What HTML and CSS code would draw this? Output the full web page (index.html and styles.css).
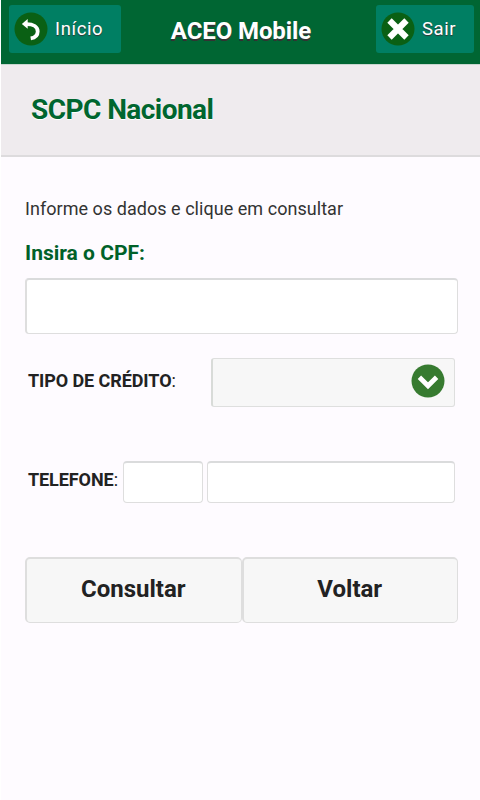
FILE: index.html
```html
<!DOCTYPE html>
<html lang="pt-BR">
<head>
<meta charset="utf-8">
<meta name="viewport" content="width=device-width">
<title>ACEO Mobile</title>
<link rel="stylesheet" href="styles.css">
</head>
<body>
<header class="bar">
  <a class="nav nav-home">
    <svg width="34" height="34" viewBox="0 0 34 34"><circle cx="17" cy="17" r="16.5" fill="#0a6014"/><path d="M12.500 12.200c7 0 11.200 2.800 11.200 7.300 0 3.800-2.700 6.200-7 6.900" fill="none" stroke="#fff" stroke-width="3.800"/><path d="M7.800 11.900 13.700 7v9.800Z" fill="#fff"/></svg>
    <span>Início</span>
  </a>
  <h1>ACEO Mobile</h1>
  <a class="nav nav-exit">
    <svg width="34" height="34" viewBox="0 0 34 34"><circle cx="17" cy="17" r="16.5" fill="#0a6014"/><path d="M8.500 8.500 25.500 25.500M25.500 8.500 8.500 25.500" stroke="#fff" stroke-width="6.200"/></svg>
    <span>Sair</span>
  </a>
</header>
<section class="heading"><h2>SCPC Nacional</h2></section>
<main>
  <p class="hint">Informe os dados e clique em consultar</p>
  <label class="cpf-label" for="cpf">Insira o CPF:</label>
  <input id="cpf" class="field cpf" type="text">
  <div class="row credit">
    <span class="label label-credit"><b>TIPO DE CRÉDITO</b>:</span>
    <div class="select">
      <svg width="34" height="34" viewBox="0 0 34 34"><circle cx="17" cy="17" r="16.5" fill="#377b30"/><path d="m8.400 13.300 8.600 8.500 8.600-8.500" fill="none" stroke="#fff" stroke-width="4.800"/></svg>
    </div>
  </div>
  <div class="row phone">
    <span class="label label-phone"><b>TELEFONE</b>:</span>
    <input class="field ddd" type="text" aria-label="DDD">
    <input class="field number" type="text" aria-label="Telefone">
  </div>
  <div class="actions">
    <button type="button">Consultar</button>
    <button type="button">Voltar</button>
  </div>
</main>
</body>
</html>
```
FILE: styles.css
```css
* { box-sizing: border-box; }
body {
  margin: 0;
  min-height: 800px;
  border-left: 1px solid #fff;
  background: #fefbff;
  color: #222;
  font-family: Roboto, "Liberation Sans", sans-serif;
}
h1, h2, p { margin: 0; }
.bar {
  display: grid;
  grid-template-columns: 112px 1fr 98px;
  align-items: start;
  height: 65px;
  padding: 5px 6px 0 8px;
  background: #006633;
  border-bottom: 1px solid #c9d6d0;
  color: #fff;
}
.nav {
  display: flex;
  align-items: center;
  height: 48px;
  padding-left: 5px;
  gap: 7px;
  border-radius: 3px;
  background: #007f63;
  font-size: 18.5px;
  line-height: 24px;
  letter-spacing: .6px;
  text-shadow: 0 1px 1px #333;
}
.nav svg { flex: none; }
h1 {
  padding: 11px 15px 0 0;
  text-align: center;
  font-size: 24px;
  line-height: 30px;
  font-weight: 700;
  letter-spacing: -.1px;
  white-space: nowrap;
  text-shadow: 0 2px 0 #333;
}
.heading {
  height: 92px;
  padding: 29px 30px 0;
  background: #efebee;
  border-bottom: 2px solid #dddbdd;
}
h2 {
  color: #00662f;
  font-size: 28px;
  line-height: 32px;
  font-weight: 700;
  letter-spacing: -.55px;
  text-shadow: 0 1px 0 #fff;
}
main { padding: 40px 22px 0 24px; }
.hint { font-size: 18px; line-height: 24px; letter-spacing: .04px; color: #333; }
.cpf-label {
  display: block;
  margin-top: 20px;
  font-size: 21px;
  line-height: 24px;
  font-weight: 700;
  color: #006129;
}
.field {
  display: block;
  min-width: 0;
  margin: 0;
  border: 1px solid #dedede;
  border-top: 2px solid #dadbdc;
  border-radius: 4px;
  background: #fff;
  outline: 0;
}
.cpf { width: 433px; height: 56px; margin-top: 13px; border-left-width: 2px; }
.row { display: flex; padding-left: 3px; }
.label { font-size: 18px; line-height: 24px; letter-spacing: -.08px; white-space: nowrap; }
.credit { margin-top: 24px; }
.label-credit { width: 183px; padding-top: 11px; }
.select {
  display: flex;
  align-items: center;
  justify-content: flex-end;
  width: 244px;
  height: 49px;
  padding: 0 9px 3px 0;
  border: 1px solid #dedfde;
  border-left: 2px solid #d8dbd8;
  border-radius: 3px;
  background: #f7f7f7;
}
.phone { margin-top: 54px; }
.label-phone { width: 95px; padding-top: 7px; }
.ddd { width: 80px; height: 42px; margin-right: 4px; }
.number { width: 248px; height: 42px; }
.actions { display: flex; margin-top: 54px; width: 433px; }
button {
  flex: 1;
  height: 66px;
  padding: 0 1px 4px 0;
  border: 1px solid #dedede;
  border-top-width: 2px;
  border-left-width: 2px;
  border-radius: 5px;
  background: #f7f7f7;
  color: #222;
  font: 700 24px/30px Roboto, "Liberation Sans", sans-serif;
}
```
